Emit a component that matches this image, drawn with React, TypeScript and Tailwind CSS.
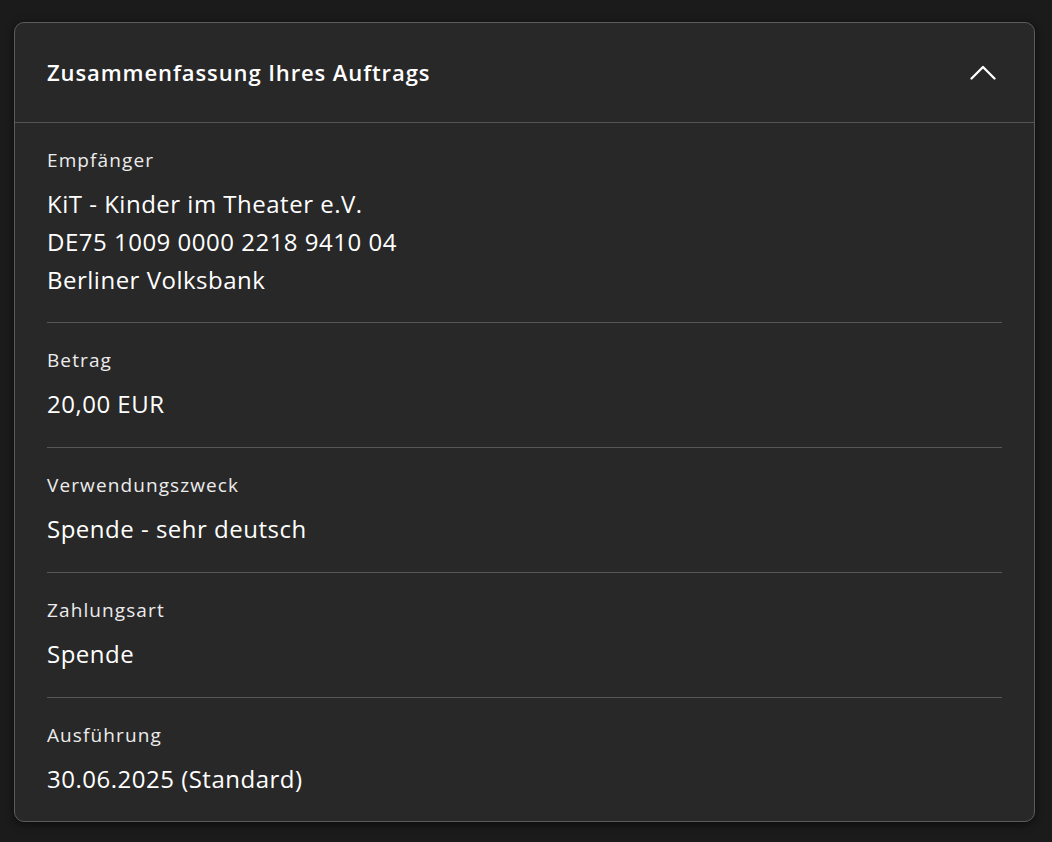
const sections: { label: string; lines: string[] }[] = [
  {
    label: "Empfänger",
    lines: ["KiT - Kinder im Theater e.V.", "DE75 1009 0000 2218 9410 04", "Berliner Volksbank"],
  },
  { label: "Betrag", lines: ["20,00 EUR"] },
  { label: "Verwendungszweck", lines: ["Spende - sehr deutsch"] },
  { label: "Zahlungsart", lines: ["Spende"] },
  { label: "Ausführung", lines: ["30.06.2025 (Standard)"] },
];

export default function App() {
  return (
    <div
      className="min-h-[842px] bg-[#1b1b1b] pl-[14px] pr-[17px] pt-[22px] pb-[20px]"
      style={{ fontFamily: '"Open Sans", "Noto Sans", sans-serif' }}
    >
      <div className="rounded-[10px] border border-[#5c5c5c] bg-[#282828] text-white shadow-[0_2px_8px_rgba(0,0,0,0.6)]">
        <div className="flex h-[100px] items-center justify-between border-b border-[#555] pl-[32px] pr-[38px]">
          <h2 className="text-[22px] font-semibold tracking-[0.9px]">Zusammenfassung Ihres Auftrags</h2>
          <svg width="26" height="15" viewBox="0 0 26 15" fill="none" className="mt-[-1px]">
            <polyline points="1.5,13.5 13,2 24.5,13.5" stroke="white" strokeWidth="2.3" strokeLinecap="round" strokeLinejoin="round" />
          </svg>
        </div>
        <div className="px-[32px]">
          {sections.map((s, i) => (
            <div
              key={s.label}
              className={`pt-[22px] ${
                i === 0
                  ? "border-b border-[#575757] pb-[23px]"
                  : i < sections.length - 1
                    ? "border-b border-[#575757] pb-[24px]"
                    : "pb-[23px]"
              }`}
            >
              <div className="text-[19px] leading-[30px] tracking-[1.1px] text-[#ececec]">{s.label}</div>
              <div className="mt-[10px] text-[24px] leading-[38px] tracking-[0.5px]">
                {s.lines.map((l) => (
                  <div key={l}>{l}</div>
                ))}
              </div>
            </div>
          ))}
        </div>
      </div>
    </div>
  );
}
